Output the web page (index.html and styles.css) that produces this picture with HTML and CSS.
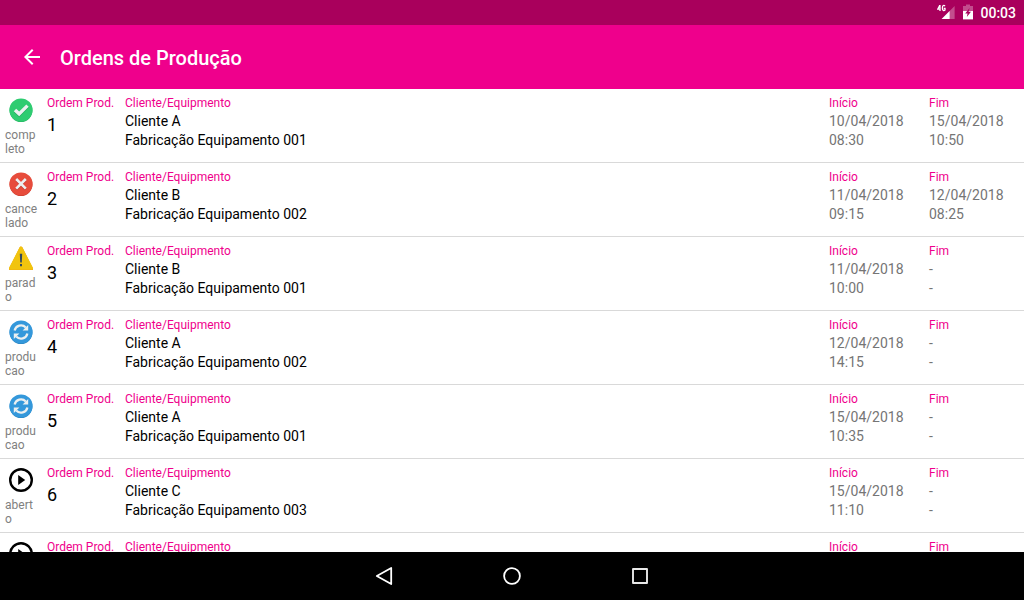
FILE: index.html
```html
<!DOCTYPE html>
<html lang="pt-BR">
<head>
<meta charset="utf-8">
<meta name="viewport" content="width=device-width, initial-scale=1">
<title>Ordens de Produção</title>
<link rel="stylesheet" href="styles.css">
</head>
<body>
<svg class="symbols" aria-hidden="true">
  <symbol id="completo" viewBox="0 0 24 24">
    <circle cx="12" cy="12.6" r="11.4" fill="#27ae60"/>
    <circle cx="12" cy="12" r="11.6" fill="#2ecc71"/>
    <path d="M4.8 14.2l2.4-2.5 3 2.9 7.1-7.2 2.4 2.4-9.5 9.5z" fill="#27ae60"/>
    <path d="M4.8 13.2l2.4-2.5 3 2.9 7.1-7.2 2.4 2.4-9.5 9.5z" fill="#ecf0f1"/>
  </symbol>
  <symbol id="cancelado" viewBox="0 0 24 24">
    <circle cx="12" cy="12.6" r="11.4" fill="#c0392b"/>
    <circle cx="12" cy="12" r="11.6" fill="#e74c3c"/>
    <path d="M7.4 8.2l9.2 9.2M16.6 8.2l-9.2 9.2" stroke="#c0392b" stroke-width="2.6"/>
    <path d="M7.2 7l9.6 9.6M16.8 7l-9.6 9.6" stroke="#ecf0f1" stroke-width="2.6"/>
  </symbol>
  <symbol id="parado" viewBox="0 0 24 24">
    <path d="M12 2L22.5 23h-21z" fill="#f39c12" stroke="#f39c12" stroke-width="3" stroke-linejoin="round"/>
    <path d="M12 2L22.500 22.200h-21z" fill="#f1c40f" stroke="#f1c40f" stroke-width="3" stroke-linejoin="round"/>
    <path d="M10.800 7.800h2.400l-.4 8.600h-1.600zM11 18h2v2.200h-2z" fill="#34495e"/>
  </symbol>
  <symbol id="producao" viewBox="0 0 24 24">
    <circle cx="12" cy="12.6" r="11.4" fill="#2980b9"/>
    <circle cx="12" cy="12" r="11.6" fill="#3498db"/>
    <path d="M5.6 10.6a6.6 6.6 0 0 1 11.2-3.2M18.4 13.4a6.6 6.6 0 0 1-11.2 3.2" fill="none" stroke="#ecf0f1" stroke-width="2.2"/>
    <path d="M19.2 5v5.6h-5.6zM4.8 19v-5.6h5.6z" fill="#ecf0f1"/>
  </symbol>
  <symbol id="aberto" viewBox="0 0 24 24">
    <circle cx="12" cy="12" r="10.8" fill="none" stroke="#000" stroke-width="2.4"/>
    <path d="M9.2 7v10l7-5z" fill="#000"/>
  </symbol>
</svg>

<div class="status-bar">
  <svg class="signal" viewBox="0 0 18 16" role="img" aria-label="4G">
    <path d="M17.6 2v13H4.6z" fill="#fff" fill-opacity=".3"/>
    <path d="M12.6 7v8H4.6z" fill="#fff"/>
    <path d="M2.8 1.2L.7 5.2h3M3 1v6M8 2.2C7 .8 5.4 1.2 5.4 4S7 7 8 6V4.4H6.8" fill="none" stroke="#fff" stroke-width="1.3"/>
  </svg>
  <svg class="battery" viewBox="0 0 10 16" role="img" aria-label="Bateria carregando">
    <path d="M0 2h3V.6h4V2h3v5H0z" fill="#fff" fill-opacity=".3"/>
    <path d="M0 7h10v8.4H0z" fill="#fff"/>
    <path d="M6.600 4L2.200 9.400h2.400L3.800 13 8 7.800H5.600z" fill="#a9005c"/>
  </svg>
  <time class="clock">00:03</time>
</div>

<header class="app-bar">
  <button class="back" type="button" aria-label="Voltar">
    <svg viewBox="0 0 24 24"><path d="M20 11H7.830l5.590-5.590L12 4l-8 8 8 8 1.410-1.410L7.830 13H20v-2z" fill="#fff"/></svg>
  </button>
  <h1 class="title">Ordens de Produção</h1>
</header>

<main class="orders-view">
  <ul class="orders">
    <li class="order">
      <div class="state"><svg class="state-icon"><use href="#completo"/></svg><span class="state-name">comp<wbr>leto</span></div>
      <div class="number"><span class="label">Ordem Prod.</span><span class="order-id">1</span></div>
      <div class="client"><span class="label">Cliente/Equipmento</span><span>Cliente A</span><span>Fabricação Equipamento 001</span></div>
      <div class="date"><span class="label">Início</span><span>10/04/2018</span><span>08:30</span></div>
      <div class="date"><span class="label">Fim</span><span>15/04/2018</span><span>10:50</span></div>
    </li>
    <li class="order">
      <div class="state"><svg class="state-icon"><use href="#cancelado"/></svg><span class="state-name">cance<wbr>lado</span></div>
      <div class="number"><span class="label">Ordem Prod.</span><span class="order-id">2</span></div>
      <div class="client"><span class="label">Cliente/Equipmento</span><span>Cliente B</span><span>Fabricação Equipamento 002</span></div>
      <div class="date"><span class="label">Início</span><span>11/04/2018</span><span>09:15</span></div>
      <div class="date"><span class="label">Fim</span><span>12/04/2018</span><span>08:25</span></div>
    </li>
    <li class="order">
      <div class="state"><svg class="state-icon"><use href="#parado"/></svg><span class="state-name">parad<wbr>o</span></div>
      <div class="number"><span class="label">Ordem Prod.</span><span class="order-id">3</span></div>
      <div class="client"><span class="label">Cliente/Equipmento</span><span>Cliente B</span><span>Fabricação Equipamento 001</span></div>
      <div class="date"><span class="label">Início</span><span>11/04/2018</span><span>10:00</span></div>
      <div class="date"><span class="label">Fim</span><span>-</span><span>-</span></div>
    </li>
    <li class="order">
      <div class="state"><svg class="state-icon"><use href="#producao"/></svg><span class="state-name">produ<wbr>cao</span></div>
      <div class="number"><span class="label">Ordem Prod.</span><span class="order-id">4</span></div>
      <div class="client"><span class="label">Cliente/Equipmento</span><span>Cliente A</span><span>Fabricação Equipamento 002</span></div>
      <div class="date"><span class="label">Início</span><span>12/04/2018</span><span>14:15</span></div>
      <div class="date"><span class="label">Fim</span><span>-</span><span>-</span></div>
    </li>
    <li class="order">
      <div class="state"><svg class="state-icon"><use href="#producao"/></svg><span class="state-name">produ<wbr>cao</span></div>
      <div class="number"><span class="label">Ordem Prod.</span><span class="order-id">5</span></div>
      <div class="client"><span class="label">Cliente/Equipmento</span><span>Cliente A</span><span>Fabricação Equipamento 001</span></div>
      <div class="date"><span class="label">Início</span><span>15/04/2018</span><span>10:35</span></div>
      <div class="date"><span class="label">Fim</span><span>-</span><span>-</span></div>
    </li>
    <li class="order">
      <div class="state"><svg class="state-icon"><use href="#aberto"/></svg><span class="state-name">abert<wbr>o</span></div>
      <div class="number"><span class="label">Ordem Prod.</span><span class="order-id">6</span></div>
      <div class="client"><span class="label">Cliente/Equipmento</span><span>Cliente C</span><span>Fabricação Equipamento 003</span></div>
      <div class="date"><span class="label">Início</span><span>15/04/2018</span><span>11:10</span></div>
      <div class="date"><span class="label">Fim</span><span>-</span><span>-</span></div>
    </li>
    <li class="order">
      <div class="state"><svg class="state-icon"><use href="#aberto"/></svg></div>
      <div class="number"><span class="label">Ordem Prod.</span></div>
      <div class="client"><span class="label">Cliente/Equipmento</span></div>
      <div class="date"><span class="label">Início</span></div>
      <div class="date"><span class="label">Fim</span></div>
    </li>
  </ul>
</main>

<nav class="nav-bar" aria-label="Sistema">
  <button class="nav-button" type="button" aria-label="Voltar">
    <svg viewBox="0 0 24 24"><path d="M19.2 4v16L4.800 12z" fill="none" stroke="#fff" stroke-width="1.8" stroke-linejoin="round"/></svg>
  </button>
  <button class="nav-button" type="button" aria-label="Início">
    <svg viewBox="0 0 24 24"><circle cx="12" cy="12" r="7.9" fill="none" stroke="#fff" stroke-width="1.8"/></svg>
  </button>
  <button class="nav-button" type="button" aria-label="Recentes">
    <svg viewBox="0 0 24 24"><rect x="5" y="5" width="14" height="14" fill="none" stroke="#e8e8e8" stroke-width="1.9" stroke-linejoin="round"/></svg>
  </button>
</nav>
</body>
</html>
```

FILE: styles.css
```css
* {
  box-sizing: border-box;
}

body {
  margin: 0;
  height: 100vh;
  display: flex;
  flex-direction: column;
  background: #fff;
  color: #000;
  font-family: Roboto, "Liberation Sans", sans-serif;
  font-size: 14px;
  line-height: 19px;
}

button {
  display: flex;
  align-items: center;
  justify-content: center;
  padding: 0;
  border: 0;
  background: none;
}

.symbols {
  position: absolute;
  width: 0;
  height: 0;
}

/* System status bar */
.status-bar {
  display: flex;
  flex: none;
  align-items: flex-start;
  justify-content: flex-end;
  padding: 4px 8px 2px;
  background: #a9005c;
  color: #fff;
}

.signal {
  width: 18px;
  height: 16px;
  margin-right: 8px;
}

.battery {
  width: 10px;
  height: 16px;
  margin-right: 7px;
}

.clock {
  font-weight: 500;
}

/* App bar */
.app-bar {
  display: flex;
  flex: none;
  align-items: flex-start;
  gap: 16px;
  padding: 20px 20px 18px;
  background: #ef008c;
  color: #fff;
}

.back,
.back svg {
  width: 24px;
  height: 24px;
}

.title {
  margin: 0;
  font-size: 20px;
  font-weight: 500;
  line-height: 26px;
}

/* Order list */
.orders-view {
  flex: 1;
  min-height: 0;
  overflow: hidden;
}

.orders {
  margin: 0;
  padding: 0;
  list-style: none;
}

.order {
  display: grid;
  grid-template-columns: 33px 69px 1fr 91px 90px;
  column-gap: 9px;
  padding: 7px 5px 6px;
  border-bottom: 1px solid #d9d9d9;
}

.order span {
  display: block;
}

.state {
  padding-top: 2px;
}

.state-icon {
  display: block;
  width: 24px;
  height: 24px;
  margin: 0 0 6px 4px;
}

.order .state-name {
  color: #808080;
  font-size: 12px;
  line-height: 14px;
}

.order .label {
  margin-bottom: 2px;
  color: #ef008c;
  font-size: 12px;
  line-height: 14px;
  white-space: nowrap;
}

.order .order-id {
  font-size: 18px;
  line-height: 26px;
}

.date {
  color: #757575;
}

/* System navigation bar */
.nav-bar {
  display: flex;
  flex: none;
  justify-content: center;
  gap: 80px;
  background: #000;
}

.nav-button {
  width: 48px;
  height: 48px;
}

.nav-button svg {
  width: 24px;
  height: 24px;
}
```
